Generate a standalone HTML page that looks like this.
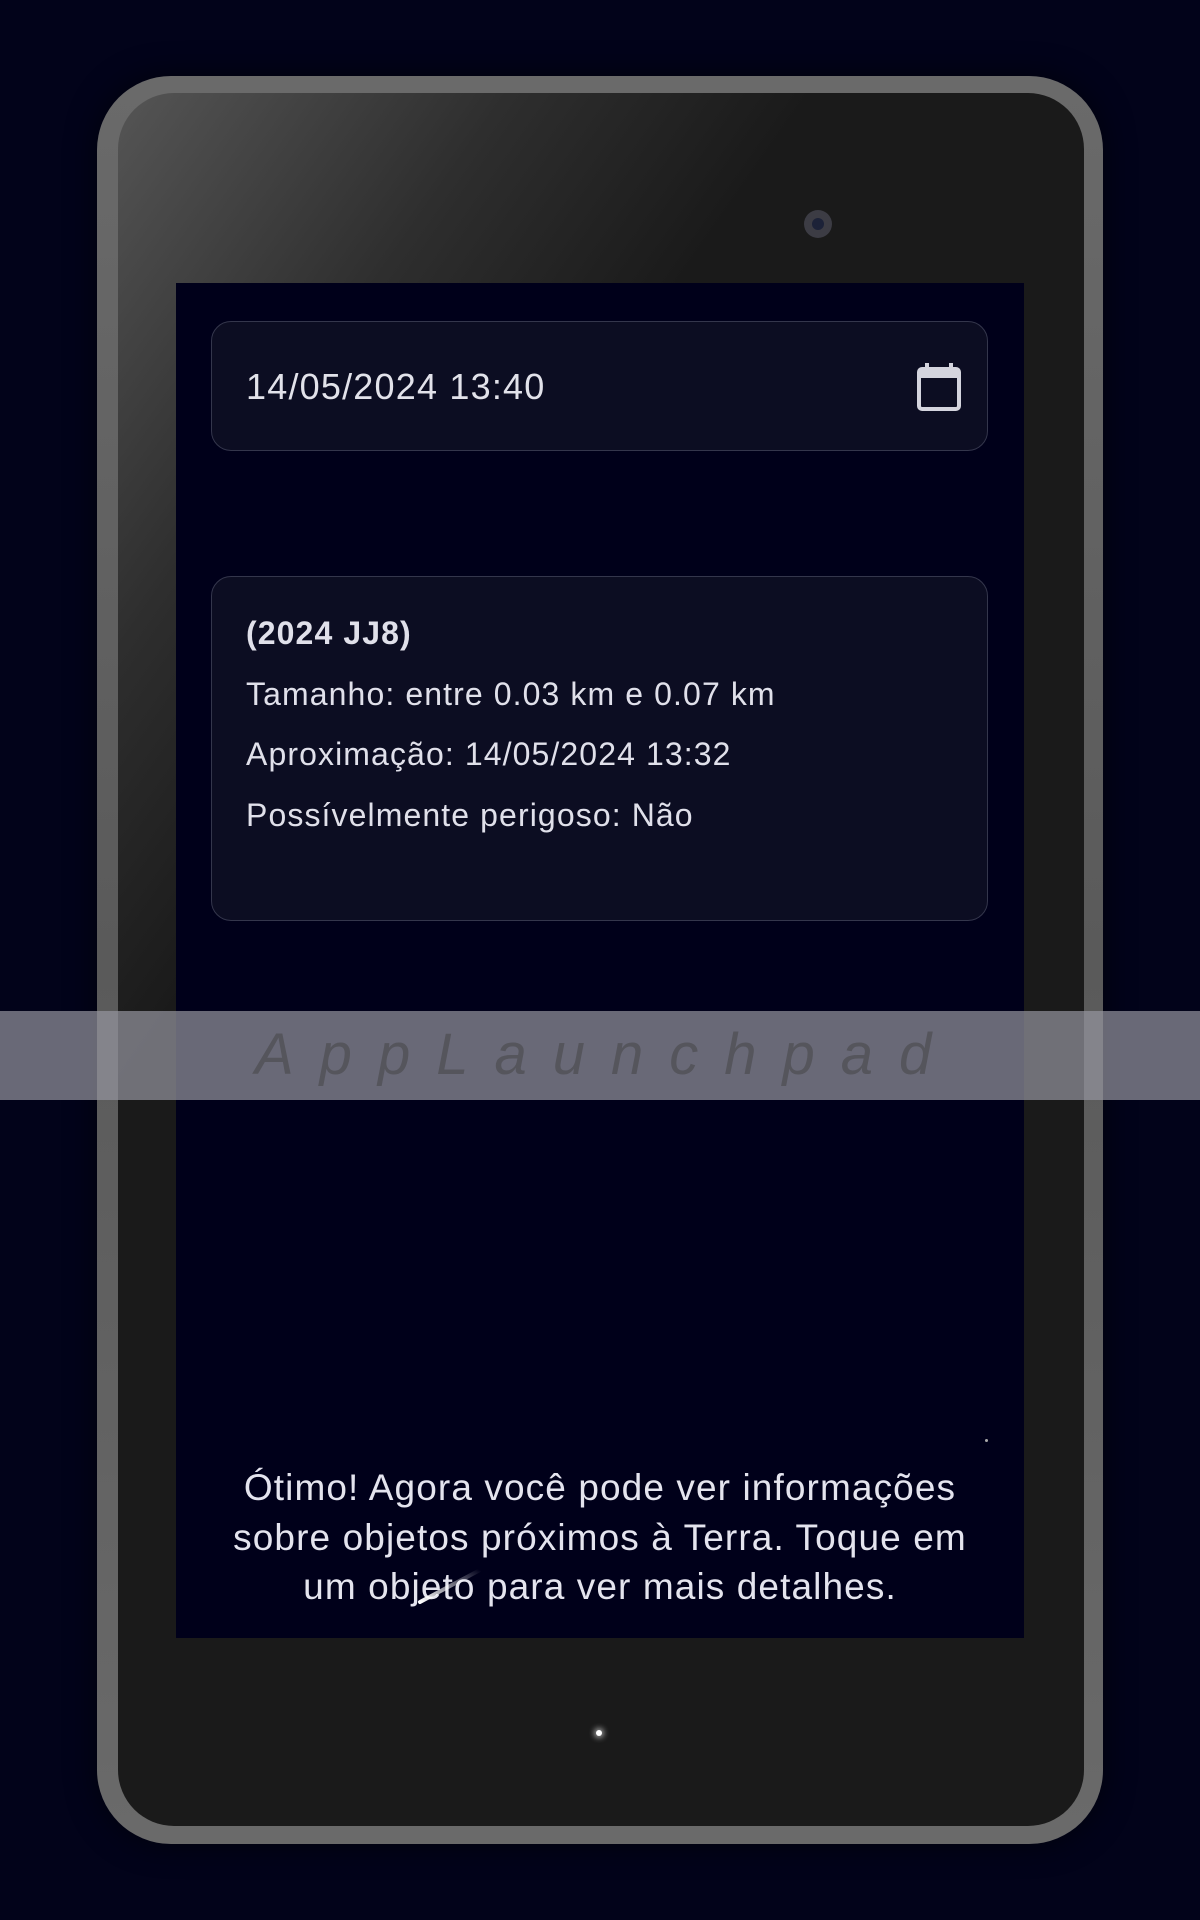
<!DOCTYPE html>
<html><head><meta charset="utf-8"><style>
html,body{margin:0;padding:0}
body{width:1200px;height:1920px;background:#02031a;position:relative;overflow:hidden;font-family:"Liberation Sans","DejaVu Sans",sans-serif}
.outer{position:absolute;left:97px;top:76px;width:1006px;height:1768px;border-radius:74px;background:linear-gradient(180deg,#6a6a6a,#5a5a5a 50%,#6a6a6a);box-shadow:0 0 30px rgba(0,0,0,.6)}
.inner{position:absolute;left:118px;top:93px;width:966px;height:1733px;border-radius:56px;background:linear-gradient(125deg,#555 0%,#2e2e2e 18%,#1a1a1a 32%,#1a1a1a 100%)}
.cam{position:absolute;left:804px;top:210px;width:28px;height:28px;border-radius:50%;background:#3c3c44}
.cam:after{content:"";position:absolute;left:8px;top:8px;width:12px;height:12px;border-radius:50%;background:#1c2238}
.screen{position:absolute;left:176px;top:283px;width:848px;height:1355px;background:#00001a;overflow:hidden}
.field{position:absolute;left:35px;top:38px;width:775px;height:128px;border:1px solid #34364c;border-radius:20px;background:#0c0d22}
.field .t{position:absolute;left:34px;top:44px;font-size:36px;color:#e2e2ea;letter-spacing:1.2px}
.card{position:absolute;left:35px;top:293px;width:775px;height:343px;border:1px solid #34364c;border-radius:20px;background:#0c0d22;color:#e0e0ea}
.card div{position:absolute;left:34px;font-size:32px;letter-spacing:1.1px}
.wm{position:absolute;left:0;top:1011px;width:1200px;height:89px;background:rgba(150,150,160,.7)}
.wm span{position:absolute;left:255px;top:10px;font-size:58px;font-style:italic;color:#55555c;letter-spacing:26px;white-space:nowrap}
.msg{position:absolute;left:-20px;width:888px;top:1180px;text-align:center;color:#e4e4ee;font-size:37px;line-height:49.5px;letter-spacing:1.1px}
.dot{position:absolute;left:596px;top:1730px;width:6px;height:6px;border-radius:50%;background:#fff;box-shadow:0 0 6px 2px rgba(255,255,255,.6)}
</style></head><body>
<div class="outer"></div>
<div class="inner"></div>
<div class="cam"></div>
<div class="screen">
 <div class="field"><div class="t">14/05/2024 13:40</div>
  <svg style="position:absolute;left:704px;top:40px" width="46" height="50" viewBox="0 0 46 50"><rect x="3" y="7" width="40" height="40" rx="3" fill="none" stroke="#d4d4de" stroke-width="4"/><rect x="3" y="7" width="40" height="9" fill="#d4d4de"/><rect x="9" y="1" width="4" height="8" fill="#d4d4de"/><rect x="33" y="1" width="4" height="8" fill="#d4d4de"/></svg>
 </div>
 <div class="card">
  <div style="top:38px;font-weight:bold">(2024 JJ8)</div>
  <div style="top:99px">Tamanho: entre 0.03 km e 0.07 km</div>
  <div style="top:159px">Aproximação: 14/05/2024 13:32</div>
  <div style="top:220px">Possívelmente perigoso: Não</div>
 </div>
 <div class="msg">Ótimo! Agora você pode ver informações<br>sobre objetos próximos à Terra. Toque em<br>um objeto para ver mais detalhes.</div>
 <svg style="position:absolute;left:230px;top:1275px" width="100" height="50"><defs><linearGradient id="g" x1="0" y1="1" x2="1" y2="0"><stop offset="0" stop-color="#fff"/><stop offset="1" stop-color="#fff" stop-opacity="0"/></linearGradient></defs><line x1="14" y1="44" x2="74" y2="12" stroke="url(#g)" stroke-width="4" stroke-linecap="round"/></svg>
 <div style="position:absolute;left:809px;top:1156px;width:3px;height:3px;background:#aaa;border-radius:50%"></div>
</div>
<div class="wm"><span>AppLaunchpad</span></div>
<div class="dot"></div>
</body></html>
